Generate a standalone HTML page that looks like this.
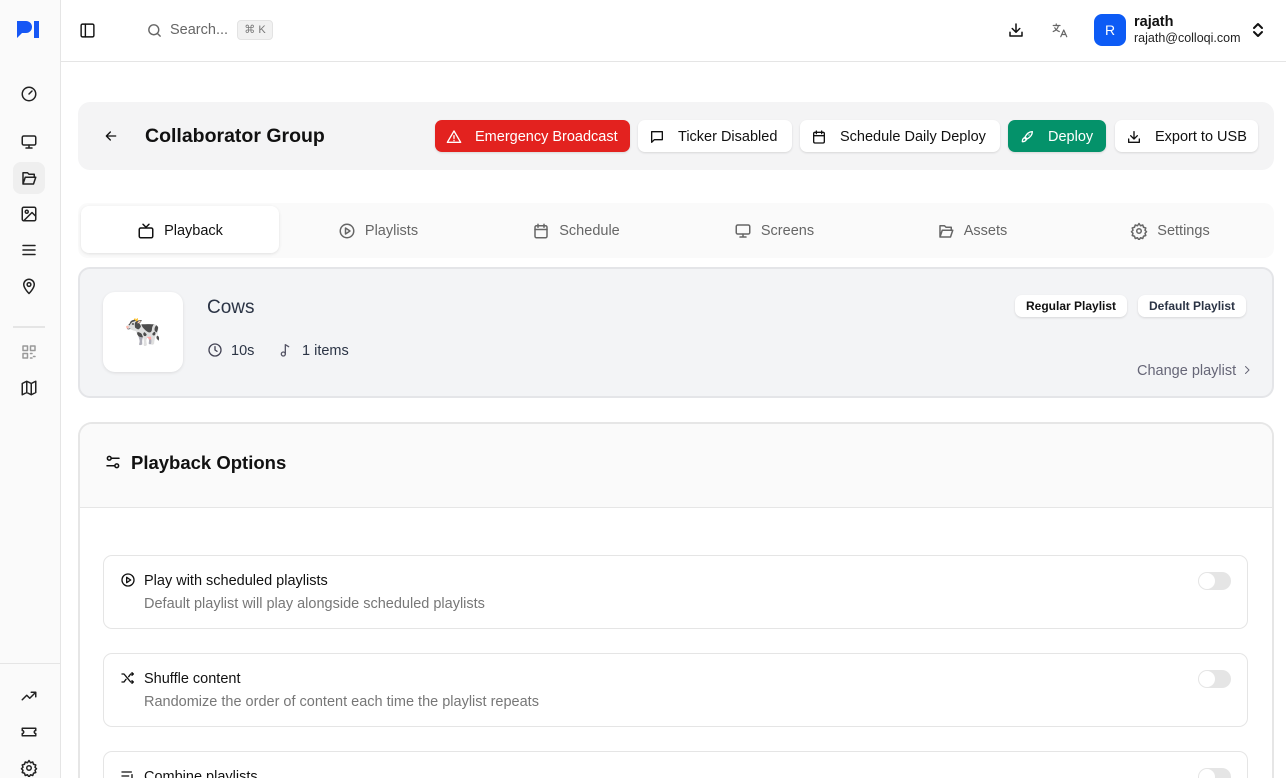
<!DOCTYPE html>
<html style="width:1286px;height:778px;overflow:hidden"><head><meta charset="utf-8"><style>
*{box-sizing:border-box;margin:0;padding:0}
body{width:1286px;height:778px;overflow:hidden;font-family:"Liberation Sans",sans-serif;background:#fff;color:#111;position:relative}
svg{fill:none;stroke:currentColor;stroke-width:2;stroke-linecap:round;stroke-linejoin:round}
.abs{position:absolute}
.side{left:0;top:0;width:61px;height:778px;background:#fafafa;border-right:1px solid #e5e5e5}
.si{position:absolute;left:20px;width:18px;height:18px;color:#222}
.top{left:61px;top:0;right:0;height:62px;border-bottom:1px solid #e5e5e5}
.btn{position:absolute;top:120px;height:32px;border-radius:7px;background:#fff;box-shadow:0 1px 2px rgba(0,0,0,.12);font-size:14.5px;display:flex;align-items:center;padding-left:11px;gap:13px;color:#111;padding-top:1px}
.btn svg{width:16px;height:16px}
.tab{position:absolute;top:207px;width:198px;height:47px;display:flex;align-items:center;justify-content:center;gap:9px;font-size:14.5px;color:#666}
.tab svg{width:18px;height:18px}
.opt{position:absolute;left:103px;width:1145px;height:74px;border:1px solid #e5e5e5;border-radius:9px;background:#fff}
.opt .t{position:absolute;left:40px;top:17px;font-size:14.5px;color:#111}
.opt .d{position:absolute;left:40px;top:40px;font-size:14.5px;color:#777}
.opt svg{position:absolute;left:16px;top:16px;width:16px;height:16px}
.tg{position:absolute;right:16px;top:16px;width:33px;height:18px;border-radius:9px;background:#e5e5e5}
.tg::after{content:"";position:absolute;left:1px;top:1px;width:16px;height:16px;border-radius:50%;background:#fff}
.pill{position:absolute;top:295px;height:22px;border-radius:7px;background:#fff;box-shadow:0 1px 2px rgba(0,0,0,.12);font-size:12px;font-weight:bold;display:flex;align-items:center;padding:0 11px}
</style></head><body>
<div class="abs side">
 <svg class="abs" style="left:17px;top:21px;width:24px;height:18px" viewBox="0 0 24 18"><path d="M0 0h9a6 6 0 0 1 0 12H5l-5 5z" fill="#1657f5" stroke="none"/><rect x="17" y="0" width="5" height="17" fill="#1657f5" stroke="none"/></svg>
 <svg class="si" style="top:85px" viewBox="0 0 24 24"><circle cx="12" cy="12" r="9"/><path d="M12 12l4-4"/></svg>
 <svg class="si" style="top:133px" viewBox="0 0 24 24"><rect x="3" y="4" width="18" height="12" rx="2"/><path d="M8 20h8M12 16v4"/></svg>
 <div class="abs" style="left:13px;top:162px;width:32px;height:32px;border-radius:8px;background:#efefef"></div>
 <svg class="si" style="top:169px" viewBox="0 0 24 24"><path d="M4 20h14l3-9H7l-3 9zM4 20V5h6l2 2h7v4"/></svg>
 <svg class="si" style="top:205px" viewBox="0 0 24 24"><rect x="3" y="3" width="18" height="18" rx="2"/><circle cx="9" cy="9" r="2"/><path d="M21 15l-5-5L5 21"/></svg>
 <svg class="si" style="top:241px" viewBox="0 0 24 24"><path d="M4 6h16M4 12h16M4 18h16"/></svg>
 <svg class="si" style="top:277px" viewBox="0 0 24 24"><path d="M12 22s7-7 7-12a7 7 0 0 0-14 0c0 5 7 12 7 12z"/><circle cx="12" cy="10" r="2.5"/></svg>
 <div class="abs" style="left:13px;top:326px;width:32px;height:2px;background:#e5e5e5"></div>
 <svg class="si" style="top:343px;color:#999" viewBox="0 0 24 24"><rect x="4" y="4" width="6" height="6"/><rect x="14" y="4" width="6" height="6"/><rect x="4" y="14" width="6" height="6"/><path d="M14 14h2M18 18h2M14 20h2"/></svg>
 <svg class="si" style="top:379px" viewBox="0 0 24 24"><path d="M3 6l6-3 6 3 6-3v15l-6 3-6-3-6 3zM9 3v15M15 6v15"/></svg>
 <div class="abs" style="left:0;top:663px;width:60px;height:1px;background:#e5e5e5"></div>
 <svg class="si" style="top:687px" viewBox="0 0 24 24"><path d="M3 17l6-6 4 4 8-8M15 7h6v6"/></svg>
 <svg class="si" style="top:723px" viewBox="0 0 24 24"><path d="M3 7h18v3a2 2 0 0 0 0 4v3H3v-3a2 2 0 0 0 0-4z"/></svg>
 <svg class="si" style="top:759px;height:18px" viewBox="0 0 24 24"><circle cx="12" cy="12" r="3"/><path d="M12 2l2 3 3-1 1 3 3 1-1 3 2 2-2 2 1 3-3 1-1 3-3-1-2 3-2-3-3 1-1-3-3-1 1-3-2-2 2-2-1-3 3-1 1-3 3 1z"/></svg>
</div>
<div class="abs top">
 <svg class="abs" style="left:18px;top:22px;width:17px;height:17px" viewBox="0 0 24 24"><rect x="3" y="3" width="18" height="18" rx="2"/><path d="M9 3v18"/></svg>
 <svg class="abs" style="left:85px;top:22px;width:17px;height:17px;color:#666" viewBox="0 0 24 24"><circle cx="11" cy="11" r="7"/><path d="M20 20l-4-4"/></svg>
 <div class="abs" style="left:109px;top:22px;font-size:14.5px;color:#666">Search...</div>
 <div class="abs" style="left:176px;top:20px;width:36px;height:20px;border-radius:4px;background:#f1f1f1;border:1px solid #e3e3e3;font-size:11px;color:#777;text-align:center;line-height:18px">⌘ K</div>
 <svg class="abs" style="left:946px;top:21px;width:18px;height:18px" viewBox="0 0 24 24"><path d="M4 15v5h16v-5M12 4v11M7 10l5 5 5-5"/></svg>
 <svg class="abs" style="left:990px;top:21px;width:18px;height:18px;color:#666;stroke-width:1.6" viewBox="0 0 24 24"><path d="M3 6h9M7 4v2M10 6c-1 4-4 7-7 8M5 9c1 2 3 4 6 5M13 21l4-9 4 9M14.5 18h5"/></svg>
 <div class="abs" style="left:1033px;top:14px;width:32px;height:32px;border-radius:8px;background:#0d5bf5;color:#fff;font-size:14px;text-align:center;line-height:32px">R</div>
 <div class="abs" style="left:1073px;top:14px;font-size:14.5px;font-weight:bold;color:#111">rajath</div>
 <div class="abs" style="left:1073px;top:31px;font-size:12.5px;color:#222">rajath@colloqi.com</div>
 <svg class="abs" style="left:1190px;top:22px;width:14px;height:16px" viewBox="0 0 14 16"><path d="M3 6l4-4 4 4M3 10l4 4 4-4"/></svg>
</div>
<div class="abs" style="left:78px;top:102px;width:1196px;height:68px;background:#f4f4f5;border-radius:12px"></div>
<svg class="abs" style="left:103px;top:128px;width:16px;height:16px" viewBox="0 0 24 24"><path d="M19 12H5M11 6l-6 6 6 6"/></svg>
<div class="abs" style="left:145px;top:125px;font-size:19.5px;font-weight:bold;color:#111">Collaborator Group</div>
<div class="btn" style="left:435px;width:195px;background:#e3221f;color:#fff"><svg viewBox="0 0 24 24"><path d="M12 3L2 20h20zM12 10v4M12 17v.5"/></svg>Emergency Broadcast</div>
<div class="btn" style="left:638px;width:154px"><svg viewBox="0 0 24 24"><path d="M4 4h16v12H8l-4 4z"/></svg>Ticker Disabled</div>
<div class="btn" style="left:800px;width:200px"><svg viewBox="0 0 24 24"><rect x="4" y="5" width="16" height="16" rx="2"/><path d="M4 10h16M8 3v4M16 3v4"/></svg>Schedule Daily Deploy</div>
<div class="btn" style="left:1008px;width:98px;background:#04926a;color:#fff"><svg viewBox="0 0 24 24"><path d="M5 19c0-3 1-5 3-6l3 3c-1 2-3 3-6 3zM9 12c3-6 7-8 11-8 0 4-2 8-8 11zM15 9h.01"/></svg>Deploy</div>
<div class="btn" style="left:1115px;width:143px"><svg viewBox="0 0 24 24"><path d="M4 15v5h16v-5M12 4v11M7 10l5 5 5-5"/></svg>Export to USB</div>
<div class="abs" style="left:78px;top:203px;width:1196px;height:55px;background:#fafafa;border-radius:10px"></div>
<div class="abs" style="left:81px;top:206px;width:198px;height:47px;background:#fff;border-radius:8px;box-shadow:0 1px 3px rgba(0,0,0,.1)"></div>
<div class="tab" style="left:81px;color:#111"><svg viewBox="0 0 24 24"><rect x="3" y="8" width="18" height="13" rx="2"/><path d="M8 3l4 4 4-4"/></svg>Playback</div>
<div class="tab" style="left:279px"><svg viewBox="0 0 24 24"><circle cx="12" cy="12" r="9"/><path d="M10 8l6 4-6 4z"/></svg>Playlists</div>
<div class="tab" style="left:477px"><svg viewBox="0 0 24 24"><rect x="4" y="5" width="16" height="16" rx="2"/><path d="M4 10h16M8 3v4M16 3v4"/></svg>Schedule</div>
<div class="tab" style="left:675px"><svg viewBox="0 0 24 24"><rect x="3" y="4" width="18" height="12" rx="2"/><path d="M8 20h8M12 16v4"/></svg>Screens</div>
<div class="tab" style="left:873px"><svg viewBox="0 0 24 24"><path d="M4 20h14l3-9H7l-3 9zM4 20V5h6l2 2h7v4"/></svg>Assets</div>
<div class="tab" style="left:1071px"><svg viewBox="0 0 24 24"><circle cx="12" cy="12" r="3"/><path d="M12 2l2 3 3-1 1 3 3 1-1 3 2 2-2 2 1 3-3 1-1 3-3-1-2 3-2-3-3 1-1-3-3-1 1-3-2-2 2-2-1-3 3-1 1-3 3 1z"/></svg>Settings</div>
<div class="abs" style="left:78px;top:267px;width:1196px;height:131px;background:#f3f4f6;border:2px solid #e4e5e8;border-radius:12px"></div>
<div class="abs" style="left:103px;top:292px;width:80px;height:80px;background:#fff;border-radius:12px;box-shadow:0 1px 3px rgba(0,0,0,.1);font-size:30px;text-align:center;line-height:80px">🐄</div>
<div class="abs" style="left:207px;top:297px;font-size:19px;color:#2b3445">Cows</div>
<svg class="abs" style="left:207px;top:342px;width:16px;height:16px;color:#445" viewBox="0 0 24 24"><circle cx="12" cy="12" r="9"/><path d="M12 7v5l3 2"/></svg>
<div class="abs" style="left:231px;top:343px;font-size:14.5px;color:#2b3445">10s</div>
<svg class="abs" style="left:278px;top:342px;width:16px;height:16px;color:#556" viewBox="0 0 24 24"><circle cx="8" cy="18" r="3"/><path d="M11 18V4l5 3"/></svg>
<div class="abs" style="left:302px;top:343px;font-size:14.5px;color:#2b3445">1 items</div>
<div class="pill" style="left:1015px">Regular Playlist</div>
<div class="pill" style="left:1138px;color:#2b3445">Default Playlist</div>
<div class="abs" style="left:1137px;top:363px;font-size:14.5px;color:#667">Change playlist</div>
<svg class="abs" style="left:1241px;top:364px;width:12px;height:12px;color:#667" viewBox="0 0 24 24"><path d="M9 5l7 7-7 7"/></svg>
<div class="abs" style="left:78px;top:422px;width:1196px;height:356px;border:2px solid #e6e6e6;border-bottom:none;border-radius:14px 14px 0 0;overflow:hidden">
 <div style="height:84px;background:#fafafa;border-bottom:1px solid #e6e6e6"></div>
</div>
<svg class="abs" style="left:104px;top:453px;width:18px;height:18px" viewBox="0 0 24 24"><circle cx="7" cy="7" r="2.5"/><path d="M10 7h10M4 17h10"/><circle cx="17" cy="17" r="2.5"/></svg>
<div class="abs" style="left:131px;top:452px;font-size:18.5px;font-weight:bold;color:#111">Playback Options</div>
<div class="opt" style="top:555px"><svg viewBox="0 0 24 24"><circle cx="12" cy="12" r="9"/><path d="M10 8l6 4-6 4z"/></svg><div class="t">Play with scheduled playlists</div><div class="d">Default playlist will play alongside scheduled playlists</div><div class="tg"></div></div>
<div class="opt" style="top:653px"><svg viewBox="0 0 24 24"><path d="M3 6h3l10 12h4M3 18h3l3-4M13 10l3-4h4M18 4l2 2-2 2M18 16l2 2-2 2"/></svg><div class="t">Shuffle content</div><div class="d">Randomize the order of content each time the playlist repeats</div><div class="tg"></div></div>
<div class="opt" style="top:751px;height:27px;border-bottom:none;border-radius:9px 9px 0 0;overflow:hidden"><svg viewBox="0 0 24 24"><path d="M3 6h14M3 12h10M3 18h8M18 10v10M15 17l3 3 3-3"/></svg><div class="t">Combine playlists</div><div class="tg"></div></div>
</body></html>
